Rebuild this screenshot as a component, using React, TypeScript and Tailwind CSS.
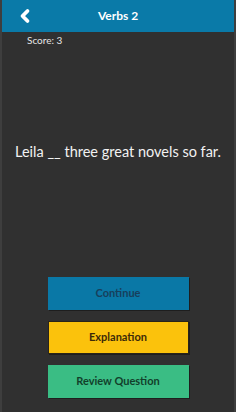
import { ChevronLeft } from 'lucide-react'

const buttons = [
  { label: 'Continue', cls: 'bg-[#0a78a6] text-[#173f5c]' },
  { label: 'Explanation', cls: 'bg-[#fbc20c] text-[#3d2a08] border border-[#2a2418]' },
  { label: 'Review Question', cls: 'bg-[#3abd84] text-[#123f2b]' },
]

export default function App() {
  return (
    <div
      className="flex h-[412px] w-[236px] flex-col border-x-2 border-[#3e3e3e] bg-[#303030]"
      style={{ fontFamily: 'Lato, "Noto Sans", sans-serif' }}
    >
      <header className="relative flex h-8 shrink-0 items-center justify-center bg-[#0a7aa8]">
        <ChevronLeft className="absolute left-[13px] h-5 w-5 text-white" strokeWidth={4.5} />
        <span className="text-[12px] font-bold text-white">Verbs 2</span>
      </header>
      <div className="pl-[25px] pt-[1px] text-[10px] leading-[14px] text-[#e6e6e6]">Score: 3</div>
      <div className="flex flex-1 items-center justify-center pb-[20px]">
        <p className="text-[14.5px] text-[#f2f2f2]">Leila __ three great novels so far.</p>
      </div>
      <div className="flex flex-col items-center gap-[11px] pb-[14px]">
        {buttons.map((b) => (
          <button
            key={b.label}
            className={`h-[33px] w-[141px] text-[11px] font-bold shadow-[1px_1px_0_#1e1e1e] ${b.cls}`}
          >
            {b.label}
          </button>
        ))}
      </div>
    </div>
  )
}
